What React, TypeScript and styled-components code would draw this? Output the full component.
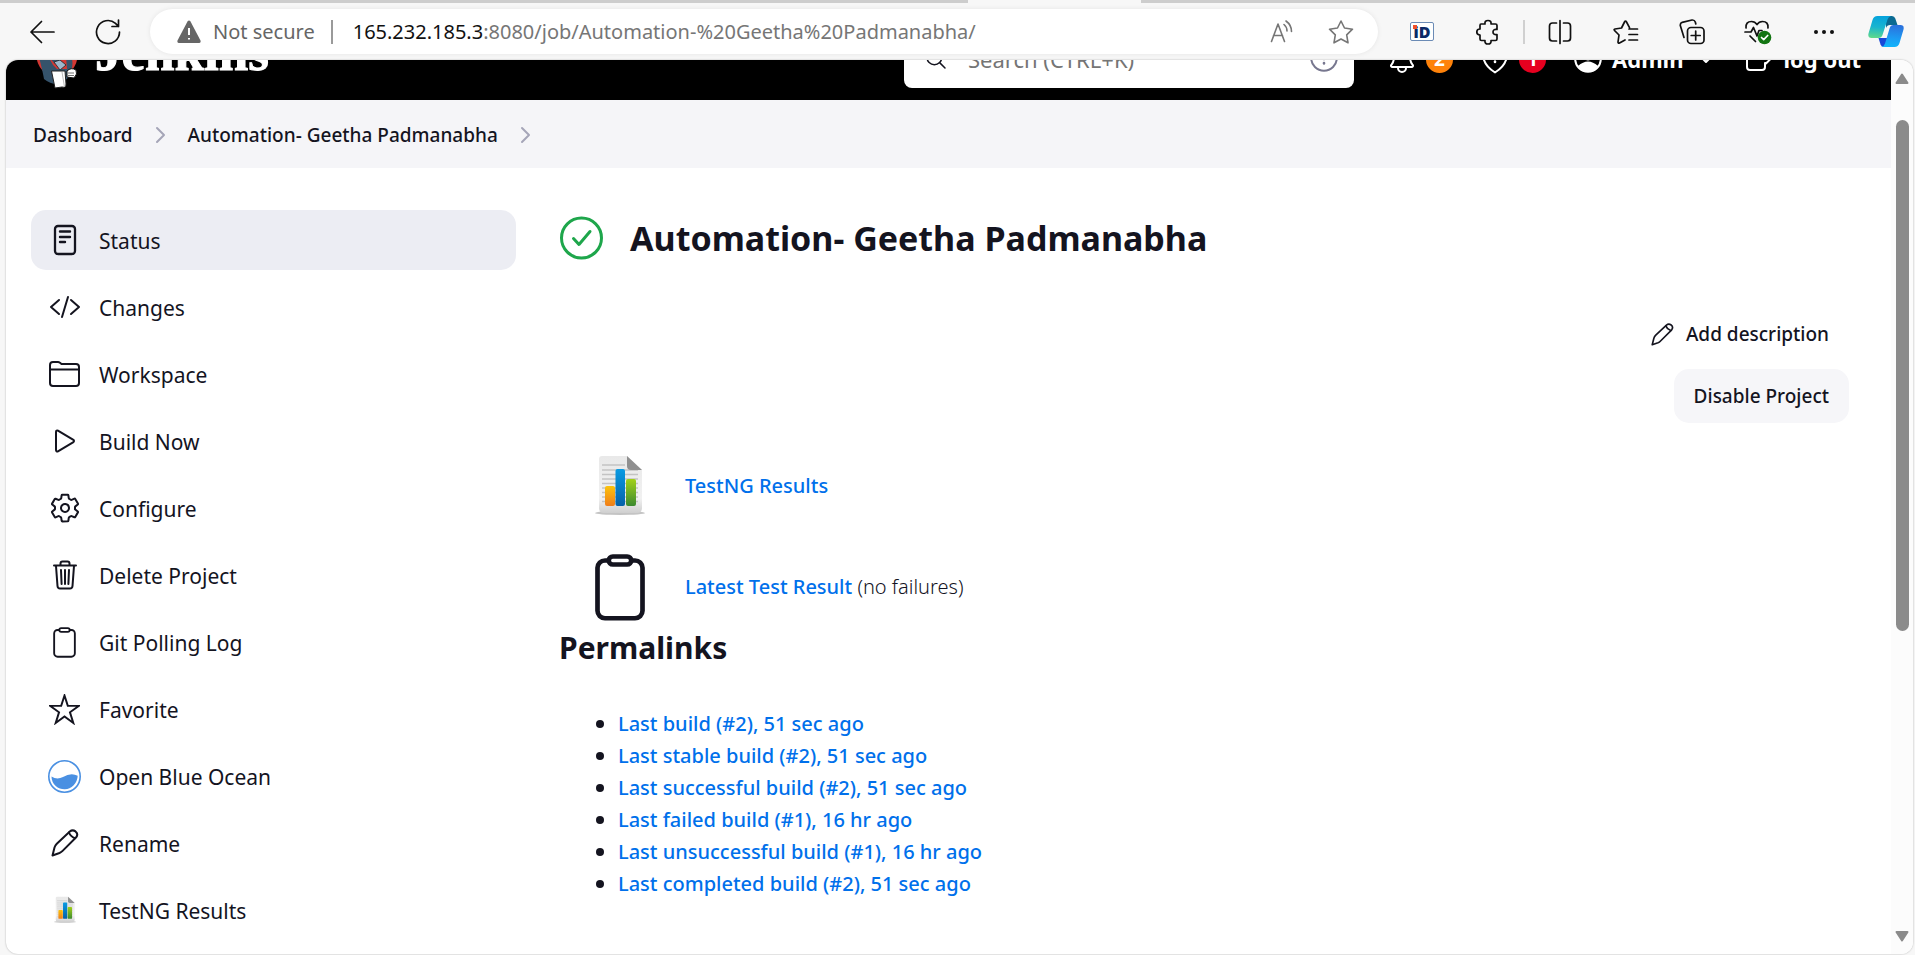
import React from "react";
import styled, { createGlobalStyle } from "styled-components";
import {
  IoCodeSlashOutline,
  IoNotificationsOutline,
  IoPlayOutline,
  IoSearchOutline,
  IoSettingsOutline,
} from "react-icons/io5";

const ink = "#14141f";
const link = "#0070eb";

const GlobalStyle = createGlobalStyle`
  *, *::before, *::after { box-sizing: border-box; }
  body {
    margin: 0;
    background: #f7f7f7;
    color: ${ink};
    font-family: "Noto Sans", "Open Sans", sans-serif;
    font-size: 20px;
    line-height: 32px;
  }
  button, input { font: inherit; color: inherit; }
  a { color: inherit; text-decoration: none; }
  ul { list-style: none; margin: 0; padding: 0; }
  svg { display: block; flex: none; }
`;

/* ---------- browser chrome ---------- */

const Browser = styled.div`
  display: flex;
  flex-direction: column;
  min-height: 100vh;
`;

const TabStrip = styled.div`
  display: flex;
  justify-content: space-between;
  height: 3px;
`;

const TabGround = styled.div<{ $share: number }>`
  flex: ${(p) => p.$share} 1 0;
  background: #cdcdcd;
`;

const ActiveTab = styled.div`
  flex: none;
  width: 173px;
`;

const Toolbar = styled.div`
  display: flex;
  align-items: center;
  height: 57px;
  padding-left: 9px;
`;

const ToolButton = styled.button<{ $narrow?: boolean }>`
  display: flex;
  flex: none;
  align-items: center;
  justify-content: center;
  width: ${(p) => (p.$narrow ? 58 : 66)}px;
  height: 48px;
  padding: 0;
  border: 0;
  background: none;
  color: #111;
`;

const ToolDivider = styled.span`
  flex: none;
  width: 2px;
  height: 24px;
  margin: 0 2px;
  background: #d0d0d0;
`;

const AddressBar = styled.div`
  display: flex;
  flex: 1;
  align-items: center;
  min-width: 0;
  height: 45px;
  margin: 0 11px 0 9px;
  padding: 0 24px 0 27px;
  border-radius: 23px;
  background: #fff;
  box-shadow: 0 0 5px rgba(0, 0, 0, 0.08);
  color: #767676;
  white-space: nowrap;
`;

const SecurityLabel = styled.span`
  margin-left: 12px;
  color: #666;
`;

const AddressDivider = styled.span`
  width: 2px;
  height: 24px;
  margin: 0 20px 0 16px;
  background: #9a9a9a;
`;

const Url = styled.span`
  flex: 1;
  overflow: hidden;
`;

const UrlHost = styled.span`
  color: #111;
`;

const AddressActions = styled.div`
  display: flex;
  gap: 34px;
`;

const AddressButton = styled.button`
  padding: 0;
  border: 0;
  background: none;
  color: #767676;
`;

const IdLogo = styled.span`
  position: relative;
  display: flex;
  align-items: center;
  justify-content: center;
  width: 24px;
  height: 19px;
  border: 1px solid #6b8bb5;
  border-radius: 2px;
  background: #fff;
  color: #0b2a66;
  font-family: "Open Sans", sans-serif;
  font-size: 16px;
  font-weight: 800;
  line-height: 16px;
  &::before {
    content: "";
    position: absolute;
    top: 2px;
    left: 2px;
    width: 4px;
    height: 4px;
    background: #f0502a;
  }
`;

const Viewport = styled.div`
  display: flex;
  flex: 1;
  margin: 0 2px 1px 6px;
  border-radius: 12px;
  background: #fff;
  box-shadow: 0 0 2px rgba(0, 0, 0, 0.3);
  overflow: hidden;
`;

const Scrollbar = styled.div`
  display: flex;
  flex: none;
  flex-direction: column;
  align-items: center;
  width: 22px;
  padding: 13px 0 12px;
  background: #fcfcfc;
`;

const ScrollTrack = styled.div`
  flex: 1;
  padding-top: 36px;
`;

const ScrollThumb = styled.div`
  width: 13px;
  height: 63%;
  border-radius: 7px;
  background: #8b8b8b;
`;

/* ---------- page ---------- */

const Page = styled.div`
  flex: 1;
  min-width: 0;
`;

const Header = styled.header`
  display: flex;
  align-items: flex-end;
  height: 40px;
  background: #000;
  color: #fff;
  overflow: hidden;
`;

const HeaderRow = styled.div`
  display: flex;
  flex: 1;
  align-items: center;
  justify-content: space-between;
  height: 82px;
  padding: 0 30px;
  font-size: 22px;
`;

const Brand = styled.a`
  display: flex;
  align-items: center;
  gap: 17px;
`;

const Wordmark = styled.span`
  padding-bottom: 14px;
  font-family: "Liberation Serif", serif;
  font-size: 53px;
  font-weight: 700;
  line-height: 60px;
  -webkit-text-stroke: 1px #fff;
`;

const HeaderTools = styled.div`
  display: flex;
  align-items: center;
`;

const SearchBox = styled.label`
  display: flex;
  align-items: center;
  width: 450px;
  height: 58px;
  margin-right: 32px;
  padding: 0 16px 0 20px;
  border-radius: 8px;
  background: #fff;
  color: ${ink};
`;

const SearchInput = styled.input`
  flex: 1;
  min-width: 0;
  padding: 0 20px;
  border: 0;
  background: none;
  outline: 0;
  &::placeholder {
    color: #757575;
    opacity: 1;
  }
`;

const HeaderLink = styled.a<{ $gap: number; $after: number }>`
  display: flex;
  align-items: center;
  gap: ${(p) => p.$gap}px;
  margin-right: ${(p) => p.$after}px;
  font-weight: 700;
`;

const Badge = styled.span<{ $tone: string }>`
  width: 27px;
  height: 27px;
  border-radius: 50%;
  background: ${(p) => p.$tone};
  font-size: 19px;
  font-weight: 700;
  line-height: 27px;
  text-align: center;
`;

const Breadcrumbs = styled.nav`
  display: flex;
  align-items: center;
  gap: 22px;
  height: 68px;
  padding: 2px 27px 0;
  background: #f5f5f8;
  font-size: 19px;
  font-weight: 500;
`;

const Columns = styled.div`
  display: flex;
  gap: 43px;
  padding: 42px 42px 0 25px;
`;

const SideMenu = styled.nav`
  flex: none;
  width: 485px;
`;

const MenuList = styled.ul`
  display: flex;
  flex-direction: column;
  gap: 7px;
`;

const MenuLink = styled.a<{ $active?: boolean }>`
  display: flex;
  align-items: center;
  gap: 18px;
  height: 60px;
  padding: 2px 17px 0;
  border-radius: 15px;
  background: ${(p) => (p.$active ? "#ecedf3" : "none")};
  font-size: 21px;
`;

const MenuIcon = styled.span`
  display: flex;
  justify-content: center;
  width: 33px;
  padding-bottom: 2px;
  font-size: 32px;
`;

const Main = styled.main`
  flex: 1;
  min-width: 0;
`;

const TitleRow = styled.div`
  display: flex;
  align-items: center;
  gap: 26px;
  height: 56px;
`;

const Title = styled.h1`
  margin: 0;
  font-size: 34px;
  font-weight: 700;
  line-height: 56px;
`;

const Actions = styled.div`
  display: flex;
  flex-direction: column;
  align-items: flex-end;
  gap: 8px;
  margin: 41px 0 24px;
`;

const ActionButton = styled.button<{ $filled?: boolean }>`
  display: flex;
  align-items: center;
  gap: 12px;
  height: 54px;
  padding: 0 20px;
  border: 0;
  border-radius: 15px;
  background: ${(p) => (p.$filled ? "#f6f6f9" : "none")};
  font-size: 19px;
  font-weight: 500;
`;

const Results = styled.div`
  display: flex;
  flex-direction: column;
  gap: 23px;
  padding-left: 36px;
`;

const ResultRow = styled.div`
  display: flex;
  align-items: center;
  gap: 40px;
  height: 78px;
`;

const TextLink = styled.a`
  color: ${link};
  font-weight: 500;
`;

const ResultNote = styled.span`
  font-weight: 300;
`;

const SectionTitle = styled.h2`
  margin: 0 0 38px;
  font-size: 30px;
  font-weight: 700;
  line-height: 44px;
`;

const LinkList = styled.ul`
  padding-left: 37px;
`;

const LinkItem = styled.li`
  display: flex;
  align-items: center;
  gap: 14px;
  &::before {
    content: "";
    width: 8px;
    height: 8px;
    border-radius: 50%;
    background: ${ink};
  }
`;

/* ---------- icons ---------- */

type LineProps = {
  w: number;
  h: number;
  stroke?: number;
  children: React.ReactNode;
};

const Line = ({ w, h, stroke = 2, children }: LineProps) => (
  <svg
    width={w}
    height={h}
    viewBox={`0 0 ${w} ${h}`}
    fill="none"
    stroke="currentColor"
    strokeWidth={stroke}
    strokeLinecap="round"
    strokeLinejoin="round"
    aria-hidden="true"
  >
    {children}
  </svg>
);

const ReportIcon = ({ w, h }: { w: number; h: number }) => (
  <svg width={w} height={h} viewBox="0 0 50 60" aria-hidden="true">
    <defs>
      <linearGradient id="paper" x1="0" y1="0" x2="0" y2="1">
        <stop offset="0" stopColor="#e9e9e9" />
        <stop offset=".75" stopColor="#f1f1f1" />
        <stop offset="1" stopColor="#cfcfcf" />
      </linearGradient>
      <linearGradient id="barOrange" x1="0" y1="0" x2="0" y2="1">
        <stop offset="0" stopColor="#fbc30b" />
        <stop offset="1" stopColor="#f07d1a" />
      </linearGradient>
      <linearGradient id="barBlue" x1="0" y1="0" x2="0" y2="1">
        <stop offset="0" stopColor="#0a9be3" />
        <stop offset="1" stopColor="#0561a8" />
      </linearGradient>
      <linearGradient id="barGreen" x1="0" y1="0" x2="0" y2="1">
        <stop offset="0" stopColor="#a2d117" />
        <stop offset="1" stopColor="#3c8a30" />
      </linearGradient>
    </defs>
    <ellipse cx="25" cy="57" rx="25" ry="2" fill="#c4c4c4" />
    <path d="M7 0H32L47 14V52Q47 57 42 57H9Q4 57 4 52V3Q4 0 7 0Z" fill="url(#paper)" />
    <path d="M7 9H30M7 14H43M7 18.500H43M7 23H43M7 27.500H43M7 32H43M7 36.500H43M7 41H43M7 45.500H43" stroke="#c3c3c3" strokeWidth="1.300" />
    <path d="M32 0L47 14H36Q32 14 32 10Z" fill="#8f8f8f" />
    <rect x="10" y="30" width="10" height="20" rx="2" fill="url(#barOrange)" />
    <rect x="20.500" y="13" width="9.500" height="37" rx="2" fill="url(#barBlue)" />
    <rect x="31" y="23" width="10" height="27" rx="2" fill="url(#barGreen)" />
  </svg>
);

const ClipboardIcon = ({ w, h, stroke }: { w: number; h: number; stroke: number }) => (
  <svg
    width={w}
    height={h}
    viewBox="8 6 320 436"
    fill="none"
    stroke="currentColor"
    strokeWidth={stroke}
    strokeLinejoin="round"
    preserveAspectRatio="none"
    aria-hidden="true"
  >
    <path d="M240 48h24a48 48 0 0 1 48 48v280a48 48 0 0 1-48 48H72a48 48 0 0 1-48-48V96a48 48 0 0 1 48-48h24" />
    <rect x="96" y="22" width="144" height="52" rx="26" />
  </svg>
);

const PencilIcon = ({ size }: { size: number }) => (
  <svg
    width={size}
    height={size}
    viewBox="0 0 28 28"
    fill="none"
    stroke="currentColor"
    strokeWidth="2"
    strokeLinecap="round"
    strokeLinejoin="round"
    aria-hidden="true"
  >
    <path d="M1.500 26.500L3.500 18.500Q4.200 16.300 5.800 14.700L18.800 2.600Q21.500 .3 24.500 2.400Q27.600 5 25.200 8.300L11.600 21.900Q10.300 23.300 8.500 24Z" />
    <path d="M18 3.500Q19.500 7.500 24 9.200" />
  </svg>
);

const StatusIcon = () => (
  <Line w={24} h={32} stroke={2}>
    <rect x="2" y="2" width="20" height="28" rx="3" strokeWidth="2.300" />
    <path d="M7 7.500H17M7 13H17M7 18H12" strokeWidth="2.400" />
  </Line>
);

const FolderIcon = () => (
  <Line w={31} h={26}>
    <path d="M1 8V4Q1 1 4 1H9Q10 1 11 1.700L12.500 3H27Q30 3 30 6V22Q30 25 27 25H4Q1 25 1 22Z" />
    <path d="M1 8.500H30" />
  </Line>
);

const TrashIcon = () => (
  <Line w={24} h={30}>
    <path d="M1 5.500H23M7.500 5V3.500Q7.500 1.500 9.500 1.500H14.500Q16.500 1.500 16.500 3.500V5M3 6L4.500 26Q4.700 28.500 7 28.500H17Q19.300 28.500 19.500 26L21 6" />
    <path d="M8 10L8.600 24M12 10V24M16 10L15.400 24" strokeWidth="2" />
  </Line>
);

const StarIcon = () => (
  <svg width="31" height="31" viewBox="0 0 30 30" fill="none" stroke="currentColor" strokeWidth="1.900" aria-hidden="true">
    <path d="M15 1.500L18.200 11.500H29L20.300 17.700L23.500 28L15 21.800L6.500 28L9.700 17.700L1 11.500H11.800Z" />
  </svg>
);

const OceanIcon = () => (
  <svg width="33" height="33" viewBox="0 0 33 33" aria-hidden="true">
    <circle cx="16.500" cy="16.500" r="15.700" fill="#fff" stroke="#4a90e2" strokeWidth="1.600" />
    <path d="M3.500 16.500Q9 20 15 17Q23 12 29.700 15.700Q29.500 21 25.700 25.200Q21.500 29.500 16.500 29.300Q11.500 29.300 7.700 26Q3.500 22 3.500 16.500Z" fill="#4a90e2" />
  </svg>
);

const CrumbArrow = () => (
  <Line w={11} h={18}>
    <path d="M2 2L9 9L2 16" stroke="#a5a5b8" />
  </Line>
);

const ButlerLogo = () => (
  <svg width="42" height="60" viewBox="0 0 42 60" aria-hidden="true">
    <ellipse cx="21" cy="26" rx="20.500" ry="22" fill="#d33833" />
    <path d="M3 28Q7 44 8 50Q14 55 21 55L31 50Q38 40 36 30L30 26H9Z" fill="#35536b" />
    <path d="M12 27L19 35L30 27L31 40H21L17 36Z" fill="#d33833" />
    <path d="M18 33L24 31L30 36L24 41Z" fill="#9db7cc" stroke="#222" strokeWidth=".8" />
    <path d="M31 42Q35 38 40 41Q42 45 38 49L31 48Z" fill="#fff" stroke="#111" strokeWidth="1" />
    <path d="M32 44H38M32 46.500H38" stroke="#333" strokeWidth=".7" />
    <path d="M15.500 42L29 42L30 55Q30 59 26 58L19 59Z" fill="#fff" stroke="#222" strokeWidth="1" />
    <path d="M26 43L28.500 58" stroke="#bbb" strokeWidth="1" />
  </svg>
);

const CopilotIcon = () => (
  <svg width="36" height="33" viewBox="0 0 36 33" aria-hidden="true">
    <defs>
      <linearGradient id="coTeal" x1=".4" y1="0" x2=".3" y2="1">
        <stop offset="0" stopColor="#06a3dc" />
        <stop offset=".5" stopColor="#19b5cf" />
        <stop offset="1" stopColor="#5fd98b" />
      </linearGradient>
      <linearGradient id="coBlue" x1=".6" y1="0" x2=".5" y2="1">
        <stop offset="0" stopColor="#2b70dc" />
        <stop offset=".6" stopColor="#1c9bf3" />
        <stop offset="1" stopColor="#10b4fb" />
      </linearGradient>
    </defs>
    <path d="M18 1H24Q26.500 1 27.300 3.500L29.500 10H22Q19 10 18 13Z" fill="#0b6a92" />
    <path d="M10.500 23L12.500 29.500Q13.400 32 16 32H22L19 23Z" fill="#1748d8" />
    <path d="M9.500 1H23Q20.500 1.500 19.500 4.500L14.500 20Q13.500 23 10.500 23H3.500Q-.5 23 .5 18.500L4.500 5Q5.700 1 9.500 1Z" fill="url(#coTeal)" />
    <path d="M26.500 32H13.500Q16 31.500 17 28.500L21.700 13Q22.500 10 25.500 10H32.500Q36.500 10 35.500 14.500L31.500 28Q30.300 32 26.500 32Z" fill="url(#coBlue)" />
  </svg>
);

/* ---------- content ---------- */

const menu: { label: string; icon: React.ReactNode }[] = [
  { label: "Status", icon: <StatusIcon /> },
  { label: "Changes", icon: <IoCodeSlashOutline /> },
  { label: "Workspace", icon: <FolderIcon /> },
  { label: "Build Now", icon: <IoPlayOutline /> },
  { label: "Configure", icon: <IoSettingsOutline /> },
  { label: "Delete Project", icon: <TrashIcon /> },
  { label: "Git Polling Log", icon: <ClipboardIcon w={23} h={31} stroke={26} /> },
  { label: "Favorite", icon: <StarIcon /> },
  { label: "Open Blue Ocean", icon: <OceanIcon /> },
  { label: "Rename", icon: <PencilIcon size={28} /> },
  { label: "TestNG Results", icon: <ReportIcon w={22} h={28} /> },
];

const permalinks = [
  "Last build (#2), 51 sec ago",
  "Last stable build (#2), 51 sec ago",
  "Last successful build (#2), 51 sec ago",
  "Last failed build (#1), 16 hr ago",
  "Last unsuccessful build (#1), 16 hr ago",
  "Last completed build (#2), 51 sec ago",
];

const BrowserToolbar = () => (
  <Toolbar>
    <ToolButton aria-label="Back">
      <Line w={26} h={24}>
        <path d="M25 12H2M12.500 1.500L2 12L12.500 22.500" stroke="#111" strokeWidth="1.700" />
      </Line>
    </ToolButton>
    <ToolButton aria-label="Refresh">
      <Line w={26} h={26} stroke={1.7}>
        <path d="M24.500 13A11.500 11.500 0 1 1 20.500 4.300L23.500 7.500M23.500 1V7.500H17" />
      </Line>
    </ToolButton>
    <AddressBar>
      <svg width="24" height="24" viewBox="0 0 24 24" aria-hidden="true">
        <path d="M10.500 1.500Q12-.5 13.500 1.500L23.500 20.500Q24 23 22 23H2Q0 23 .5 20.500Z" fill="#666" />
        <path d="M12 8V15M12 18V19.500" stroke="#fff" strokeWidth="2" />
      </svg>
      <SecurityLabel>Not secure</SecurityLabel>
      <AddressDivider />
      <Url>
        <UrlHost>165.232.185.3</UrlHost>:8080/job/Automation-%20Geetha%20Padmanabha/
      </Url>
      <AddressActions>
        <AddressButton aria-label="Read aloud">
          <Line w={24} h={24} stroke={1.6}>
            <path d="M1.500 21.500L8 4L14.500 21.500M3.500 15.500H12.500M14 4.500Q17 7 17 11M16 1Q21.500 5 21.500 11.500" />
          </Line>
        </AddressButton>
        <AddressButton aria-label="Add to favorites">
          <Line w={26} h={26} stroke={1.6}>
            <path d="M13 2L16.500 9L24.500 10.200L18.700 15.800L20 23.800L13 20L6 23.800L7.300 15.800L1.500 10.200L9.500 9Z" />
          </Line>
        </AddressButton>
      </AddressActions>
    </AddressBar>
    <ToolButton aria-label="iD extension">
      <IdLogo>iD</IdLogo>
    </ToolButton>
    <ToolButton aria-label="Extensions">
      <Line w={24} h={26} stroke={1.7}>
        <path d="M5 5H9Q8.500 1.500 12 1.500Q15.500 1.500 15 5H19.500Q21 5 21 6.500V10.500Q17 10 17 13Q17 16 21 15.500V20Q21 21.500 19.500 21.500H15Q15.500 25 12 25Q8.500 25 9 21.500H5.500Q4 21.500 4 20V16Q.8 16 .8 13Q.8 10 4 10V6.500Q4 5 5 5Z" />
      </Line>
    </ToolButton>
    <ToolDivider />
    <ToolButton aria-label="Split screen">
      <Line w={24} h={26} stroke={1.7}>
        <path d="M12 1.500V24.500M8.500 4H4.500Q1.500 4 1.500 7V19Q1.500 22 4.500 22H8.500M15.500 4H19.500Q22.500 4 22.500 7V19Q22.500 22 19.500 22H15.500" />
      </Line>
    </ToolButton>
    <ToolButton aria-label="Favorites">
      <Line w={26} h={26} stroke={1.7}>
        <path d="M16.500 8.700L13.500 3Q12.500 1 11.500 3L8.500 9L2 10Q.5 10.500 1.500 11.500L6 16L5 23Q5 24.500 6.500 24L12 21M16 10H24.500M16 15.500H24.500M16 21H24.500" />
      </Line>
    </ToolButton>
    <ToolButton aria-label="Collections">
      <Line w={26} h={26} stroke={1.7}>
        <rect x="8.500" y="8.500" width="16.500" height="16" rx="3.500" />
        <path d="M16.700 12V21M12.200 16.500H21.200M5 18.500L1.300 6.500Q1 4 3.200 3.300L13 1Q15.500.8 16.300 3L16.800 5" />
      </Line>
    </ToolButton>
    <ToolButton aria-label="Browser essentials">
      <Line w={28} h={26} stroke={1.7}>
        <path d="M2 9Q1.500 2.500 7.500 2.500Q11 2.500 13 5.500Q15 2.500 18.500 2.500Q24.500 2.500 24 9M1 13H7L9.500 8.500L13 17L15 11.500H18M6 17L11.500 22.500" />
        <circle cx="20.500" cy="18.500" r="6.800" fill="#137512" stroke="none" />
        <path d="M17.500 18.500L19.700 20.700L23.700 16.500" stroke="#fff" />
      </Line>
    </ToolButton>
    <ToolButton aria-label="Settings and more">
      <svg width="20" height="4" viewBox="0 0 20 4" fill="#111" aria-hidden="true">
        <circle cx="2" cy="2" r="2" />
        <circle cx="10" cy="2" r="2" />
        <circle cx="18" cy="2" r="2" />
      </svg>
    </ToolButton>
    <ToolButton $narrow aria-label="Copilot">
      <CopilotIcon />
    </ToolButton>
  </Toolbar>
);

const PageHeader = () => (
  <Header>
    <HeaderRow>
      <Brand href="#home">
        <ButlerLogo />
        <Wordmark>Jenkins</Wordmark>
      </Brand>
      <HeaderTools>
        <SearchBox>
          <IoSearchOutline size={24} />
          <SearchInput type="search" aria-label="Search" placeholder="Search (CTRL+K)" />
          <Line w={28} h={28}>
            <circle cx="14" cy="13" r="12.800" stroke="#77778f" />
            <path d="M14 12.500V14M14 18V18.500" stroke="#77778f" strokeWidth="2.600" />
          </Line>
        </SearchBox>
        <HeaderLink href="#notices" $gap={8} $after={28} aria-label="2 notices">
          <IoNotificationsOutline size={32} />
          <Badge $tone="#fe820a">2</Badge>
        </HeaderLink>
        <HeaderLink href="#security" $gap={10} $after={28} aria-label="1 security warning">
          <Line w={28} h={32}>
            <path d="M14 29.500Q2 22 2 11V5L14 1L26 5V11Q26 22 14 29.500Z" />
            <path d="M14 9V14M14 18.500V19" strokeWidth="2.600" />
          </Line>
          <Badge $tone="#e6001f">1</Badge>
        </HeaderLink>
        <HeaderLink href="#user" $gap={10} $after={32}>
          <svg width="28" height="28" viewBox="0 0 28 28" aria-hidden="true">
            <circle cx="14" cy="14" r="12.800" fill="none" stroke="#fff" strokeWidth="2" />
            <circle cx="14" cy="11" r="4.500" fill="#fff" />
            <path d="M4 21Q14 12 24 21Q20 27 14 27Q8 27 4 21Z" fill="#fff" />
          </svg>
          Admin
          <Line w={20} h={12}>
            <path d="M9 5L13 9L17 5" />
          </Line>
        </HeaderLink>
        <HeaderLink href="#logout" $gap={10} $after={0}>
          <Line w={28} h={28}>
            <path d="M18 2H5Q2 2 2 5V22Q2 25 5 25H17Q20 25 20 22V18M11 13H26M21 7.500L26.500 13L21 18.500" />
          </Line>
          log out
        </HeaderLink>
      </HeaderTools>
    </HeaderRow>
  </Header>
);

export default function App() {
  return (
    <Browser>
      <GlobalStyle />
      <TabStrip>
        <TabGround $share={5} />
        <ActiveTab />
        <TabGround $share={4} />
      </TabStrip>
      <BrowserToolbar />
      <Viewport>
        <Page>
          <PageHeader />
          <Breadcrumbs aria-label="Breadcrumb">
            <a href="#dashboard">Dashboard</a>
            <CrumbArrow />
            <a href="#job">Automation- Geetha Padmanabha</a>
            <CrumbArrow />
          </Breadcrumbs>
          <Columns>
            <SideMenu aria-label="Project">
              <MenuList>
                {menu.map((item, i) => (
                  <li key={item.label}>
                    <MenuLink href={`#task-${i}`} $active={i === 0}>
                      <MenuIcon>{item.icon}</MenuIcon>
                      {item.label}
                    </MenuLink>
                  </li>
                ))}
              </MenuList>
            </SideMenu>
            <Main>
              <TitleRow>
                <Line w={45} h={45} stroke={3}>
                  <circle cx="22.500" cy="22" r="20" stroke="#1ea64b" />
                  <path d="M14.500 22.500L20 28.500L31 15.500" stroke="#1ea64b" />
                </Line>
                <Title>Automation- Geetha Padmanabha</Title>
              </TitleRow>
              <Actions>
                <ActionButton>
                  <PencilIcon size={23} />
                  Add description
                </ActionButton>
                <ActionButton $filled>Disable Project</ActionButton>
              </Actions>
              <Results>
                <ResultRow>
                  <ReportIcon w={50} h={60} />
                  <TextLink href="#testng">TestNG Results</TextLink>
                </ResultRow>
                <ResultRow>
                  <ClipboardIcon w={50} h={67} stroke={30} />
                  <span>
                    <TextLink href="#latest">Latest Test Result</TextLink>{" "}
                    <ResultNote>(no failures)</ResultNote>
                  </span>
                </ResultRow>
              </Results>
              <SectionTitle>Permalinks</SectionTitle>
              <LinkList>
                {permalinks.map((text, i) => (
                  <LinkItem key={text}>
                    <TextLink href={`#build-${i}`}>{text}</TextLink>
                  </LinkItem>
                ))}
              </LinkList>
            </Main>
          </Columns>
        </Page>
        <Scrollbar aria-hidden="true">
          <svg width="14" height="11" viewBox="0 0 14 11">
            <path d="M1.500 10L7 1.500L12.500 10Z" fill="#8b8b8b" stroke="#8b8b8b" strokeWidth="2" strokeLinejoin="round" />
          </svg>
          <ScrollTrack>
            <ScrollThumb />
          </ScrollTrack>
          <svg width="14" height="11" viewBox="0 0 14 11">
            <path d="M1.500 1L7 9.500L12.500 1Z" fill="#8b8b8b" stroke="#8b8b8b" strokeWidth="2" strokeLinejoin="round" />
          </svg>
        </Scrollbar>
      </Viewport>
    </Browser>
  );
}
